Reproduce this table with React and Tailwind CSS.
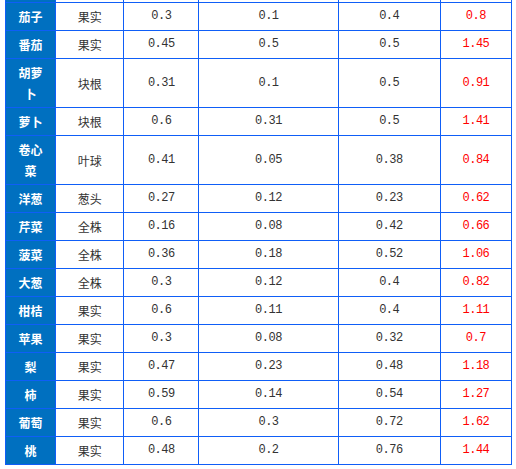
import React from 'react';

const rows = [
    ['茄子', '果实', '0.3', '0.1', '0.4', '0.8'],
    ['番茄', '果实', '0.45', '0.5', '0.5', '1.45'],
    ['胡萝卜', '块根', '0.31', '0.1', '0.5', '0.91'],
    ['萝卜', '块根', '0.6', '0.31', '0.5', '1.41'],
    ['卷心菜', '叶球', '0.41', '0.05', '0.38', '0.84'],
    ['洋葱', '葱头', '0.27', '0.12', '0.23', '0.62'],
    ['芹菜', '全株', '0.16', '0.08', '0.42', '0.66'],
    ['菠菜', '全株', '0.36', '0.18', '0.52', '1.06'],
    ['大葱', '全株', '0.3', '0.12', '0.4', '0.82'],
    ['柑桔', '果实', '0.6', '0.11', '0.4', '1.11'],
    ['苹果', '果实', '0.3', '0.08', '0.32', '0.7'],
    ['梨', '果实', '0.47', '0.23', '0.48', '1.18'],
    ['柿', '果实', '0.59', '0.14', '0.54', '1.27'],
    ['葡萄', '果实', '0.6', '0.3', '0.72', '1.62'],
    ['桃', '果实', '0.48', '0.2', '0.76', '1.44'],
];

const cell = 'border border-[#0f5ef7] py-[3px] px-2 text-center align-middle leading-[21px]';
const num = "font-['Liberation_Mono',monospace] text-[12px] tracking-[-0.5px]";

export default function App() {
    return (
        <div className="w-[516px] h-[469px] bg-white overflow-hidden font-['Noto_Sans_CJK_SC','Noto_Sans',sans-serif]">
            <table className="ml-[5px] -mt-[26px] table-fixed border-collapse w-[507px] text-[12px]">
                <colgroup>
                    <col className="w-[50px]" />
                    <col className="w-[68px]" />
                    <col className="w-[75px]" />
                    <col className="w-[139px]" />
                    <col className="w-[102px]" />
                    <col className="w-[71px]" />
                </colgroup>
                <tbody>
                    {/* tail of the row above, scrolled out of view */}
                    <tr className="h-[28px]">
                        <td className="border border-[#0f5ef7] bg-[#0070c0]"></td>
                        <td className="border border-[#0f5ef7]"></td>
                        <td className="border border-[#0f5ef7]"></td>
                        <td className="border border-[#0f5ef7]"></td>
                        <td className="border border-[#0f5ef7]"></td>
                        <td className="border border-[#0f5ef7]"></td>
                    </tr>
                    {rows.map((r) => (
                        <tr key={r[0]}>
                            <td className={`${cell} bg-[#0070c0] text-white font-bold`}>{r[0]}</td>
                            <td className={`${cell} text-[#333]`}>{r[1]}</td>
                            <td className={`${cell} text-[#333] ${num}`}>{r[2]}</td>
                            <td className={`${cell} text-[#333] ${num}`}>{r[3]}</td>
                            <td className={`${cell} text-[#333] ${num}`}>{r[4]}</td>
                            <td className={`${cell} text-[#ff0000] ${num}`}>{r[5]}</td>
                        </tr>
                    ))}
                </tbody>
            </table>
        </div>
    );
}
